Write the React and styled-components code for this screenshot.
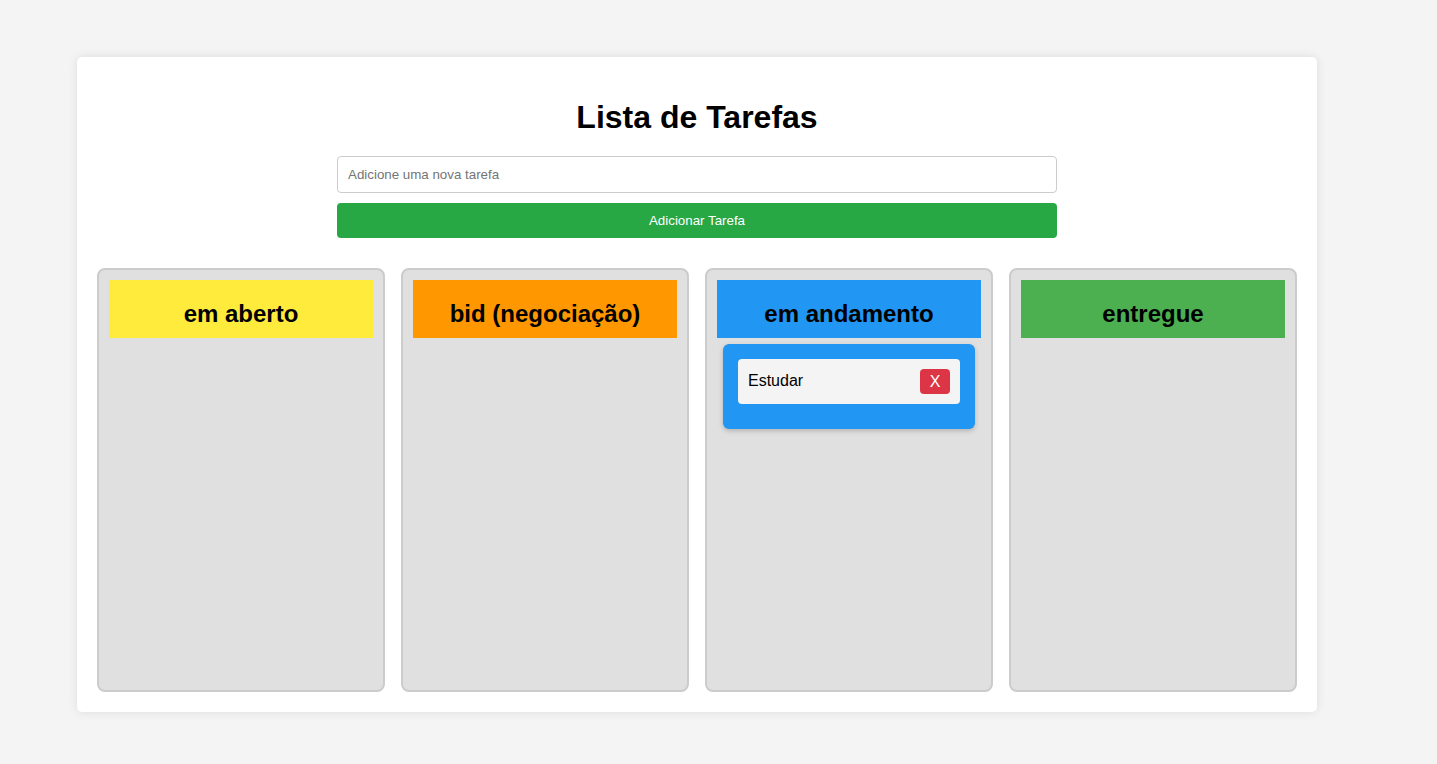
import React, { useState } from "react";
import styled, { createGlobalStyle } from "styled-components";

const Global = createGlobalStyle`
  html, body { margin: 0; padding: 0; background: #f4f4f4; }
  body { font-family: "Liberation Sans", Arial, sans-serif; min-height: 764px; }
  * { box-sizing: border-box; }
`;

const Container = styled.div`
  width: 1240px;
  margin: 57px 0 0 77px;
  padding: 20px;
  background: #fff;
  border-radius: 5px;
  box-shadow: 0 0 10px rgba(0, 0, 0, 0.1);
`;

const Title = styled.h1`
  font-size: 32px;
  font-weight: bold;
  text-align: center;
  margin: 22px 0 20px;
  line-height: 37px;
  color: #000;
`;

const Form = styled.div`
  width: 720px;
  margin: 0 auto;
  display: flex;
  flex-direction: column;
  gap: 10px;
`;

const Input = styled.input`
  width: 100%;
  height: 37px;
  padding: 10px;
  font-family: "Liberation Sans", Arial, sans-serif;
  font-size: 13.33px;
  border: 1px solid #ccc;
  border-radius: 4px;
  outline: none;
  &::placeholder { color: #757575; }
`;

const AddButton = styled.button`
  width: 100%;
  height: 35px;
  border: none;
  border-radius: 4px;
  background: #28a745;
  color: #fff;
  font-family: "Liberation Sans", Arial, sans-serif;
  font-size: 13.33px;
  cursor: pointer;
`;

const Board = styled.div`
  display: grid;
  grid-template-columns: repeat(4, 288px);
  gap: 16px;
  margin-top: 30px;
`;

const Column = styled.div`
  height: 424px;
  background: #e0e0e0;
  border: 2px solid #ccc;
  border-radius: 8px;
  padding: 10px;
`;

const ColumnHeader = styled.h2`
  margin: 0;
  background: ${(p) => p.$color};
  font-size: 24px;
  font-weight: bold;
  line-height: 28px;
  text-align: center;
  padding: 20px 10px 10px;
  color: #000;
`;

const TaskArea = styled.div`
  margin: 6px 6px 0;
  padding: 15px 15px 25px;
  background: #2196f3;
  border-radius: 6px;
  box-shadow: 0 2px 5px rgba(0, 0, 0, 0.2);
`;

const Task = styled.div`
  display: flex;
  align-items: center;
  justify-content: space-between;
  height: 45px;
  padding: 10px;
  background: #f4f4f4;
  border-radius: 4px;
  font-size: 16px;
  line-height: 18px;
  color: #000;
`;

const TaskText = styled.span`
  margin-top: -2px;
`;

const DeleteButton = styled.button`
  width: 30px;
  height: 25px;
  border: none;
  border-radius: 4px;
  background: #dc3545;
  color: #fff;
  font-family: "Liberation Sans", Arial, sans-serif;
  font-size: 16px;
  padding: 0;
  cursor: pointer;
`;

const columns = [
  { title: "em aberto", color: "#ffeb3b", tasks: [] },
  { title: "bid (negociação)", color: "#ff9800", tasks: [] },
  { title: "em andamento", color: "#2196f3", tasks: ["Estudar"] },
  { title: "entregue", color: "#4caf50", tasks: [] },
];

export default function App() {
  const [value, setValue] = useState("");
  return (
    <>
      <Global />
      <Container>
        <Title>Lista de Tarefas</Title>
        <Form>
          <Input
            placeholder="Adicione uma nova tarefa"
            value={value}
            onChange={(e) => setValue(e.target.value)}
          />
          <AddButton>Adicionar Tarefa</AddButton>
        </Form>
        <Board>
          {columns.map((c) => (
            <Column key={c.title}>
              <ColumnHeader $color={c.color}>{c.title}</ColumnHeader>
              {c.tasks.length > 0 && (
                <TaskArea>
                  {c.tasks.map((t) => (
                    <Task key={t}>
                      <TaskText>{t}</TaskText>
                      <DeleteButton>X</DeleteButton>
                    </Task>
                  ))}
                </TaskArea>
              )}
            </Column>
          ))}
        </Board>
      </Container>
    </>
  );
}
